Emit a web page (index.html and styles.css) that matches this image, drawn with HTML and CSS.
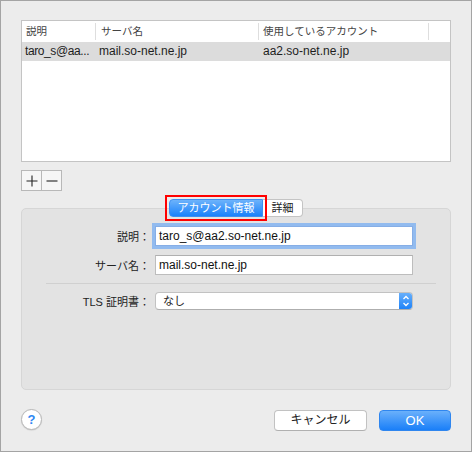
FILE: index.html
```html
<!DOCTYPE html>
<html lang="ja">
<head>
<meta charset="utf-8">
<link rel="stylesheet" href="styles.css">
</head>
<body>
<div class="window">
  <div class="table">
    <div class="thead">
      <div class="c c1">説明</div>
      <div class="c c2">サーバ名</div>
      <div class="c c3">使用しているアカウント</div>
      <div class="c c4"></div>
    </div>
    <div class="row">
      <div class="c c1 trunc">taro_s@aa...</div>
      <div class="c c2">mail.so-net.ne.jp</div>
      <div class="c c3">aa2.so-net.ne.jp</div>
      <div class="c c4"></div>
    </div>
  </div>

  <div class="addrem">
    <div class="ar"><svg width="12" height="12" viewBox="0 0 12 12"><path d="M6 0.5V11.5M0.5 6H11.5" stroke="#222" stroke-width="1.1" fill="none"/></svg></div>
    <div class="ar ar2"><svg width="12" height="12" viewBox="0 0 12 12"><path d="M0.5 6H11.5" stroke="#222" stroke-width="1.1" fill="none"/></svg></div>
  </div>

  <div class="tabs">
    <div class="hl"><div class="tab on">アカウント情報</div></div>
    <div class="tab off">詳細</div>
  </div>

  <div class="group">
    <div class="form">
      <div class="label">説明：</div>
      <div class="input focus">taro_s@aa2.so-net.ne.jp</div>
      <div class="label">サーバ名：</div>
      <div class="input">mail.so-net.ne.jp</div>
    </div>
    <div class="sep"></div>
    <div class="form">
      <div class="label">TLS 証明書：</div>
      <div class="popup">
        <span class="ptext">なし</span>
        <span class="stepper"><svg width="14" height="18" viewBox="0 0 14 18"><path d="M4.5 7L7 4.5L9.5 7M4.5 11L7 13.5L9.5 11" stroke="#fff" stroke-width="1.3" fill="none"/></svg></span>
      </div>
    </div>
  </div>

  <div class="footer">
    <div class="help">?</div>
    <div class="spacer"></div>
    <div class="btn cancel">キャンセル</div>
    <div class="btn ok">OK</div>
  </div>
</div>
</body>
</html>
```

FILE: styles.css
```css
html, body {
  margin: 0;
  padding: 0;
}
body {
  font-family: "Liberation Sans", "Noto Sans CJK JP", sans-serif;
  font-size: 12px;
  color: #222;
}
.window {
  box-sizing: border-box;
  width: 472px;
  height: 452px;
  border: 1px solid #a4a4a4;
  background: #ececec;
  padding: 19px 20px 20px;
  display: flex;
  flex-direction: column;
}
.table {
  box-sizing: border-box;
  height: 142px;
  border: 1px solid #c4c4c4;
  background: #fff;
  flex-shrink: 0;
}
.thead {
  display: flex;
  align-items: center;
  height: 21px;
  font-size: 10.5px;
  color: #444;
}
.c {
  box-sizing: border-box;
  white-space: nowrap;
  overflow: hidden;
}
.thead .c {
  height: 17px;
  line-height: 17px;
  padding-left: 4px;
  border-right: 1px solid #dedede;
}
.thead .c2 { padding-left: 5px; }
.c1 { width: 74px; }
.c2 { width: 163px; }
.c3 { width: 170px; }
.c4 { flex: 1; }
.thead .c4 { border-right: none; }
.row {
  display: flex;
  height: 19px;
  line-height: 19px;
  background: #dcdcdc;
  color: #1e1e1e;
}
.row .c { padding-left: 3px; }
.row .c3 { padding-left: 4px; }
.row .trunc { letter-spacing: -0.4px; }

.addrem {
  display: flex;
  box-sizing: border-box;
  width: 41px;
  height: 21px;
  margin-top: 8px;
  border: 1px solid #b8b8b8;
  background: #f6f6f6;
  flex-shrink: 0;
}
.ar {
  flex: 1;
  display: flex;
  align-items: center;
  justify-content: center;
}
.ar2 { border-left: 1px solid #b8b8b8; }

.tabs {
  display: flex;
  justify-content: center;
  margin-top: 8px;
  margin-bottom: -9px;
  position: relative;
  z-index: 1;
  flex-shrink: 0;
}
.hl {
  display: flex;
  position: relative;
  z-index: 2;
  outline: 2px solid #f00;
  outline-offset: 2px;
}
.tab {
  box-sizing: border-box;
  height: 18px;
  line-height: 16px;
  font-size: 11px;
  text-align: center;
}
.tab.on {
  width: 94px;
  color: #fff;
  background: linear-gradient(#6db3fb, #1a82fb);
  border: 1px solid #3f8ff0;
  border-radius: 4px 0 0 4px;
}
.tab.off {
  width: 40px;
  color: #222;
  background: #fff;
  border: 1px solid #c4c4c4;
  border-left: none;
  border-radius: 0 4px 4px 0;
}

.group {
  box-sizing: border-box;
  height: 182px;
  background: #e3e3e3;
  border: 1px solid #d6d6d6;
  border-radius: 5px;
  padding-top: 17px;
  flex-shrink: 0;
}
.form {
  display: grid;
  grid-template-columns: 128px 258px;
  column-gap: 5px;
  row-gap: 9px;
  align-items: center;
}
.label {
  text-align: right;
  font-size: 11px;
  color: #222;
}
.input {
  box-sizing: border-box;
  height: 20px;
  border: 1px solid #bdbdbd;
  border-top-color: #b0b0b0;
  background: #fff;
  padding-left: 3px;
  line-height: 18px;
  font-size: 12px;
  color: #111;
}
.input.focus {
  border-color: #86aee6;
  box-shadow: 0 0 0 3px #92bbef;
}
.sep {
  height: 1px;
  background: #d0d0d0;
  margin: 8px 14px 8px 24px;
}
.popup {
  box-sizing: border-box;
  height: 18px;
  display: flex;
  background: #fff;
  border: 1px solid #c2c2c2;
  border-bottom-color: #aeaeae;
  border-radius: 4px;
  overflow: hidden;
}
.ptext {
  flex: 1;
  padding-left: 7px;
  font-size: 11px;
  line-height: 16px;
  color: #222;
}
.stepper {
  width: 14px;
  height: 18px;
  margin: -1px -1px -1px 0;
  background: linear-gradient(#6cb2fb, #1a80f8);
  display: flex;
}

.footer {
  display: flex;
  align-items: center;
  margin-top: 20px;
  height: 21px;
  flex-shrink: 0;
}
.help {
  box-sizing: border-box;
  width: 21px;
  height: 21px;
  border-radius: 50%;
  border: 1px solid #b8b8b8;
  background: #fff;
  color: #2f87f3;
  font-weight: bold;
  font-size: 13px;
  text-align: center;
  line-height: 19px;
  box-shadow: 0 0.5px 1px rgba(0,0,0,0.15);
  margin-top: -2px;
}
.spacer { flex: 1; }
.btn {
  box-sizing: border-box;
  height: 21px;
  border-radius: 4px;
  text-align: center;
  line-height: 19px;
}
.cancel {
  width: 93px;
  margin-right: 12px;
  border: 1px solid #c2c2c2;
  border-bottom-color: #b0b0b0;
  background: #fff;
  color: #222;
  font-size: 12px;
}
.ok {
  width: 72px;
  border: 1px solid #2f86ef;
  background: linear-gradient(#6ab0fb, #1a7ff8);
  color: #fff;
  font-size: 13px;
}
```
